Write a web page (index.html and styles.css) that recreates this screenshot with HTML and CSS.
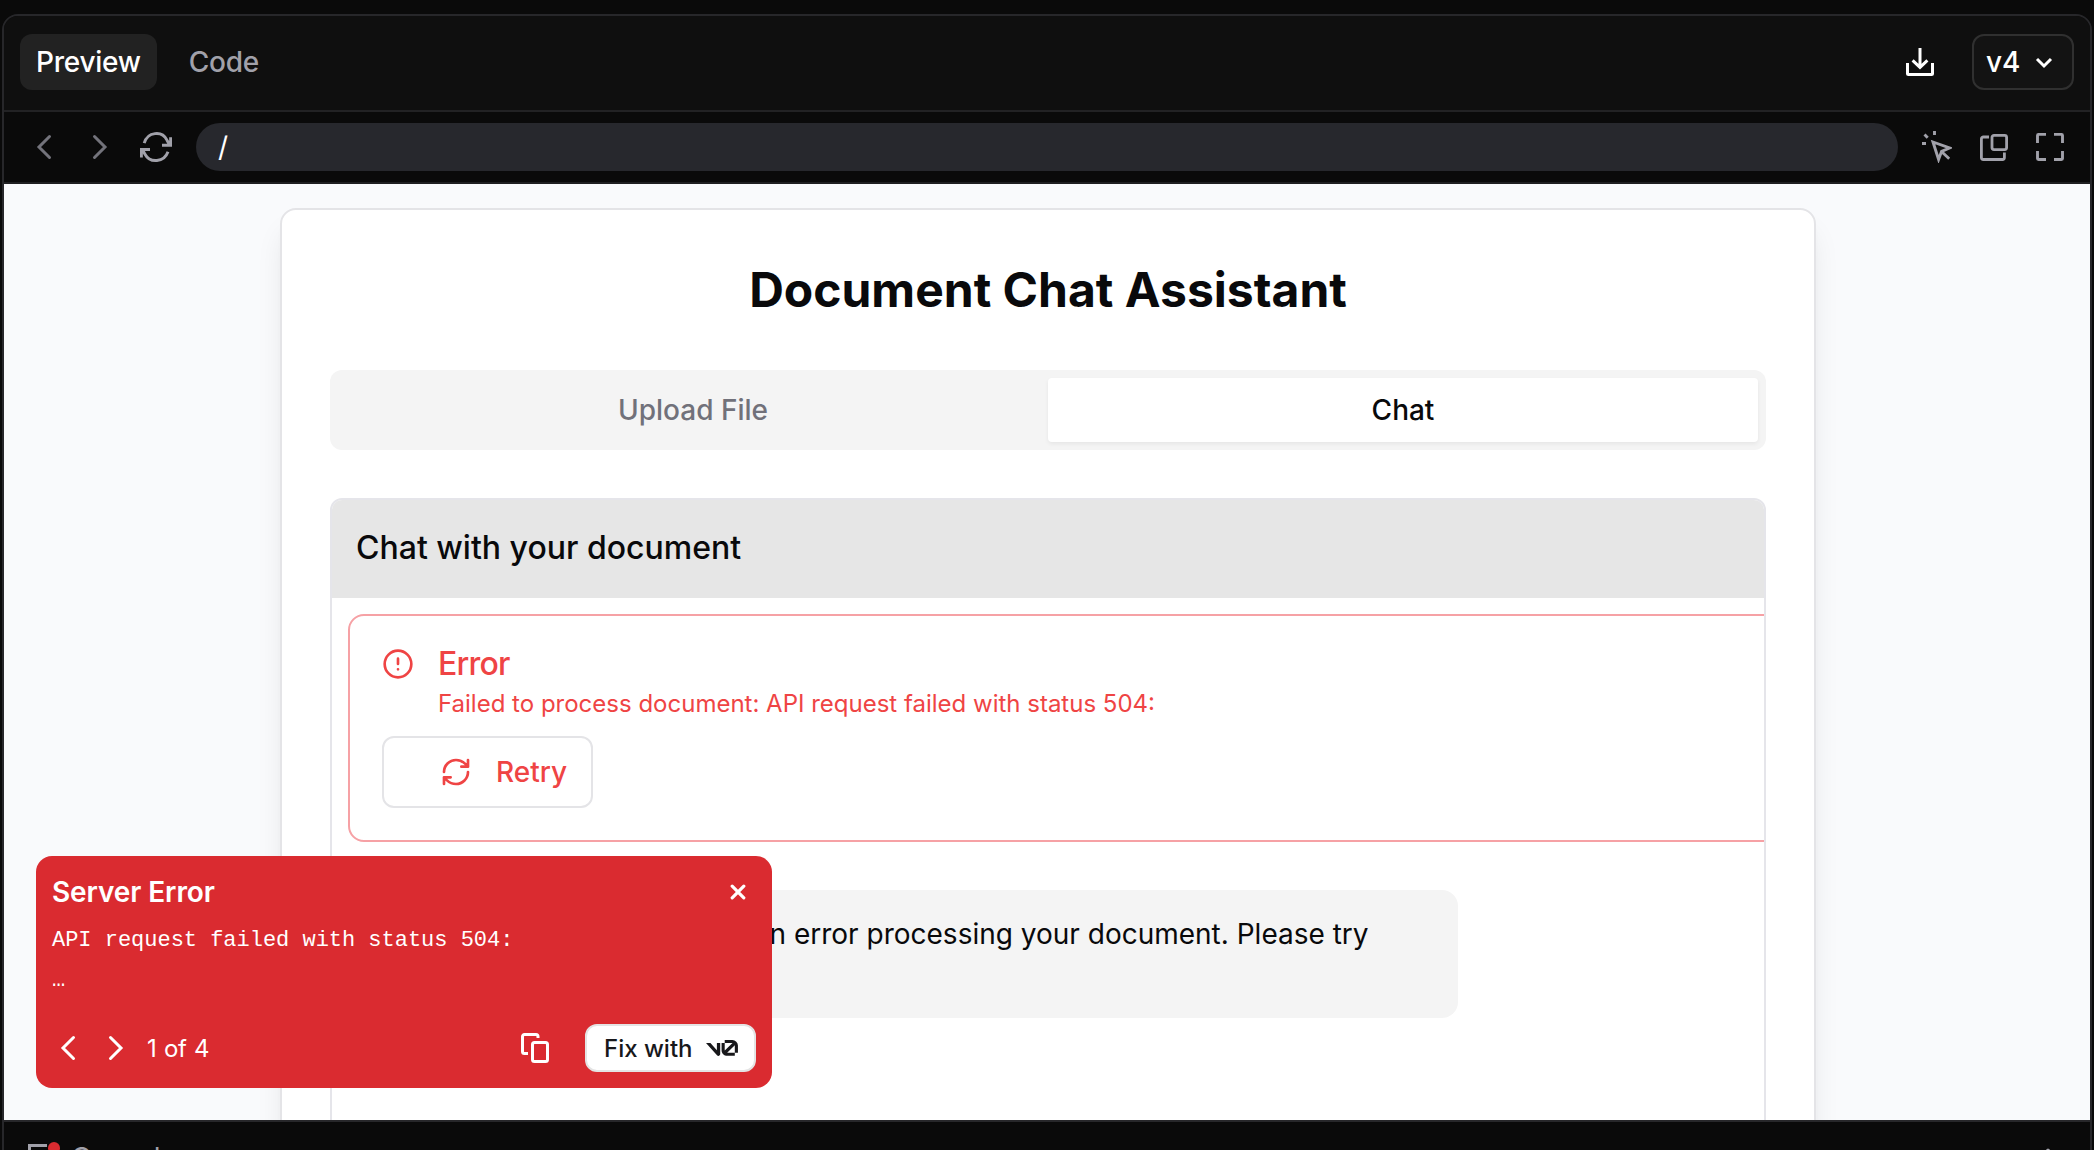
FILE: index.html
```html
<!DOCTYPE html>
<html lang="en">
<head>
<meta charset="utf-8">
<title>Document Chat Assistant</title>
<link rel="stylesheet" href="styles.css">
</head>
<body>
<div class="panel">
  <header class="topbar">
    <button class="tab tab-active">Preview</button>
    <button class="tab">Code</button>
    <svg class="icon download" viewBox="0 0 32 32" stroke-width="3"><path d="M16 2v18M8.6 14.4 16 21.4l7.4-7M3.5 17v10.5a1 1 0 0 0 1 1h23a1 1 0 0 0 1-1V17"/></svg>
    <button class="version">v4
      <svg class="icon version-arrow" viewBox="0 0 20 20" stroke-width="3"><path d="m3 7 7 7 7-7"/></svg>
    </button>
  </header>
  <nav class="navbar">
    <svg class="icon dim" viewBox="0 0 32 32" stroke-width="3"><path d="M21.500 5.500 11 16l10.500 10.500" stroke-linecap="round"/></svg>
    <svg class="icon dim forward" viewBox="0 0 32 32" stroke-width="3"><path d="M11.500 5.500 22 16 11.500 26.500" stroke-linecap="round"/></svg>
    <svg class="icon reload" viewBox="0 0 32 32" stroke-width="2.900"><path d="M4.200 12.200C7.500 .8 22-.8 27 9.200l2.500 4.500M30.600 6.300V14.300H22M28 20.800C24.200 31.500 10 32.500 5 23.200l-2.500-4.500M1.400 26.500V18.500H10"/></svg>
    <div class="address">/</div>
    <svg class="icon pick" viewBox="0 0 32 32" stroke-width="2.900"><path d="M13 11 29.500 17 21.600 20.300 18.600 28.500ZM21.500 20.500 29.200 27.700M14.500 0v4M2 12.500h4M4.500 3.500l3.200 3.200"/></svg>
    <svg class="icon windows" viewBox="0 0 32 32" stroke-width="2.800"><rect x="14" y="4.400" width="14.600" height="14.200" rx="2"/><path d="M11 6H5.400a2 2 0 0 0-2 2v18.500a2 2 0 0 0 2 2h19a2 2 0 0 0 2-2V21.500"/></svg>
    <svg class="icon full" viewBox="0 0 32 32" stroke-width="2.900"><path d="M3.500 12V4.400a1 1 0 0 1 1-1H12M20 3.400h7.500a1 1 0 0 1 1 1V12M28.500 20v7.500a1 1 0 0 1-1 1H20M12 28.500H4.500a1 1 0 0 1-1-1V20"/></svg>
  </nav>
  <main class="viewport">
    <section class="card">
      <h1>Document Chat Assistant</h1>
      <div class="switcher">
        <div class="choice">Upload File</div>
        <div class="choice chosen">Chat</div>
      </div>
      <div class="chat">
        <h2>Chat with your document</h2>
        <div class="log">
          <div class="alert">
            <svg class="icon" viewBox="0 0 24 24" stroke-width="2" stroke-linecap="round"><circle cx="12" cy="12" r="10"/><path d="M12 8v4M12 16h.01"/></svg>
            <div class="alert-text">
              <h3>Error</h3>
              <p>Failed to process document: API request failed with status 504:</p>
            </div>
            <button class="retry">
              <svg class="icon" viewBox="0 0 24 24" stroke-width="2" stroke-linecap="round" stroke-linejoin="round"><path d="M3 12a9 9 0 0 1 9-9 9.750 9.750 0 0 1 6.740 2.740L21 8M21 3v5h-5M21 12a9 9 0 0 1-9 9 9.750 9.750 0 0 1-6.740-2.740L3 16M8 16H3v5"/></svg>
              Retry
            </button>
          </div>
          <p class="message">I'm sorry, but I encountered an error processing your document. Please try again.</p>
        </div>
      </div>
    </section>
    <aside class="toast">
      <div class="toast-head">
        <strong>Server Error</strong>
        <svg class="icon close" viewBox="0 0 16 16" stroke-width="3.200"><path d="m2.200 2.200 11.600 11.600M13.800 2.200 2.200 13.800" stroke-linecap="round"/></svg>
      </div>
      <pre>API request failed with status 504:
…</pre>
      <div class="toast-foot">
        <svg class="icon" viewBox="0 0 32 32" stroke-width="3"><path d="M21.500 5.500 11 16l10.500 10.500" stroke-linecap="round"/></svg>
        <svg class="icon next" viewBox="0 0 32 32" stroke-width="3"><path d="M10.500 5.500 21 16 10.500 26.500" stroke-linecap="round"/></svg>
        <span>1 of 4</span>
        <svg class="icon copy" viewBox="0 0 32 32" stroke-width="3"><rect x="13.500" y="10.500" width="15" height="19" rx="2"/><path d="M9 21.500H5.500a2 2 0 0 1-2-2V4.500a2 2 0 0 1 2-2H17a2 2 0 0 1 2 2V6"/></svg>
        <button class="fix">Fix with
          <svg class="logo" viewBox="0 0 40 20"><path d="M23.392 0h9.527a6.995 6.995 0 0 1 6.995 6.995v9.086h-3.913V6.995c0-.093-.004-.186-.011-.277l-9.527 9.361.097.002h9.441v3.695h-9.441c-3.863 0-7.081-3.162-7.081-7.025V3.689h3.913v9.062c0 .174.014.347.040.516L33.168 3.700a3 3 0 0 0-.249-.011h-9.527ZM13.769 19.096 0 3.688h5.539l8.084 9.046V3.688h4.131v13.887c0 2.096-2.588 3.083-3.985 1.521Z"/></svg>
        </button>
      </div>
    </aside>
  </main>
  <footer class="console">
    <div class="console-icon">
      <svg class="icon" viewBox="0 0 32 32" stroke-width="3"><path d="M28.500 12v16.500h-27v-25H19"/></svg>
      <i class="badge"></i>
    </div>
    <span>Console</span>
    <svg class="icon expand" viewBox="0 0 32 32" stroke-width="3"><path d="M6 18 16 8l10 10" stroke-linecap="round" stroke-linejoin="round"/></svg>
  </footer>
</div>
</body>
</html>
```
FILE: styles.css
```css
* { box-sizing: border-box; }
html, body { height: 100%; }
body { margin: 0; padding: 14px 2px 0; background: #0a0a0a; overflow: hidden; font-family: Inter, "Liberation Sans", sans-serif; font-size: 28px; color: #09090b; }
h1, h2, h3, p, pre { margin: 0; }
button { font: inherit; border: 0; padding: 0; background: none; color: inherit; flex: none; }
.icon { width: 32px; height: 32px; flex: none; fill: none; stroke: currentColor; display: block; }

.panel { width: 2090px; height: 1180px; border: 2px solid #27272a; border-radius: 16px 16px 0 0; overflow: hidden; background: #0a0a0a; }

.topbar { height: 96px; padding: 0 16px; display: flex; align-items: center; background: #0f0f0f; border-bottom: 2px solid #222224; color: #fff; }
.tab { height: 56px; padding: 0 16px; border-radius: 12px; font-weight: 500; letter-spacing: -0.25px; color: #a1a1aa; margin-top: -2px; }
.tab + .tab { margin-left: 16px; }
.tab-active { background: #222; color: #fff; }
.download { margin: -2px 36px 0 auto; }
.version { width: 102px; height: 56px; margin-top: -2px; padding: 0 18px 0 12px; display: flex; align-items: center; justify-content: space-between; border: 2px solid #303030; border-radius: 12px; background: #131313; font-weight: 500; }
.version-arrow { width: 20px; height: 20px; }

.navbar { height: 72px; padding: 0 24px; display: flex; align-items: center; color: #a1a1aa; border-bottom: 2px solid #1f1f21; }
.dim { color: #73737b; }
.forward { margin-left: 23px; }
.reload { margin-left: 25px; }
.address { flex: 1; height: 48px; margin: 0 22px 0 24px; padding-left: 22px; border-radius: 24px; background: #27282d; color: #fff; line-height: 48px; }
.windows { margin-left: 26px; }
.full { margin-left: 24px; }

.viewport { position: relative; height: 936px; padding: 24px 0 0 276px; overflow: hidden; background: #f9fafc; }
.card { width: 1536px; height: 1000px; padding: 48px; border: 2px solid #e4e4e7; border-radius: 16px; background: #fff; box-shadow: 0 20px 30px -6px rgba(0,0,0,.1), 0 8px 12px -8px rgba(0,0,0,.1); }
h1 { height: 64px; line-height: 64px; text-align: center; font-size: 48px; font-weight: 700; }
.switcher { display: flex; height: 80px; margin-top: 48px; padding: 8px; border-radius: 12px; background: #f4f4f4; font-weight: 500; color: #71717a; }
.choice { flex: 1; line-height: 64px; text-align: center; border-radius: 4px; }
.chosen { background: #fff; color: #09090b; box-shadow: 0 2px 4px rgba(0,0,0,.06); }
.chat { height: 700px; margin-top: 48px; border: 2px solid #e5e5ea; border-radius: 12px; overflow: hidden; }
h2 { height: 98px; padding-left: 24px; line-height: 96px; font-size: 32px; font-weight: 500; background: #e6e6e6; }
.log { padding: 16px; }
.alert { width: 1440px; height: 228px; padding: 32px; display: grid; grid-template-columns: 32px auto; column-gap: 24px; align-content: start; border: 2px solid #f6a1a5; border-radius: 16px; color: #ef4444; }
h3 { font-size: 32px; font-weight: 500; line-height: 32px; letter-spacing: -0.025em; }
.alert-text p { margin-top: 6px; font-size: 24px; line-height: 36px; }
.retry { grid-column: 1 / 3; width: 211px; height: 72px; margin-top: 14px; padding-left: 56px; display: flex; align-items: center; gap: 24px; border: 2px solid #e4e4e7; border-radius: 12px; font-weight: 500; }
.message { width: 1110px; height: 128px; margin-top: 48px; padding: 24px 24px 24px 32px; border-radius: 16px; background: #f4f4f4; line-height: 40px; }

.toast { position: absolute; left: 32px; top: 672px; width: 736px; height: 232px; padding: 16px; border-radius: 16px; background: #da2b30; color: #fff; }
.toast-head { height: 40px; display: flex; align-items: center; justify-content: space-between; }
.toast-head strong { font-weight: 600; letter-spacing: -0.1px; }
.close { width: 16px; height: 16px; margin-right: 10px; }
.toast pre { margin-top: 9px; height: 103px; font: 22px/40px "Liberation Mono", monospace; letter-spacing: -0.02px; }
.toast-foot { height: 48px; display: flex; align-items: center; font-size: 24px; }
.toast-foot .next { margin-left: 16px; }
.toast-foot span { margin-left: 15px; letter-spacing: -0.3px; word-spacing: 1px; }
.copy { margin: 0 34px 0 auto; }
.fix { width: 171px; height: 48px; padding: 0 16px 0 17px; display: flex; align-items: center; justify-content: space-between; border: 2px solid #e4e4e4; border-radius: 12px; background: #fff; color: #18181b; font-weight: 500; }
.logo { width: 32px; height: 16px; fill: #18181b; }

.console { height: 74px; padding: 0 26px 0 24px; display: flex; align-items: center; border-top: 2px solid #27272a; color: #a1a1aa; letter-spacing: -0.5px; }
.console-icon { position: relative; margin-right: 11px; }
.badge { position: absolute; right: 0; top: 0; width: 12px; height: 12px; border-radius: 50%; background: #da2b30; }
.expand { margin-left: auto; }
```
